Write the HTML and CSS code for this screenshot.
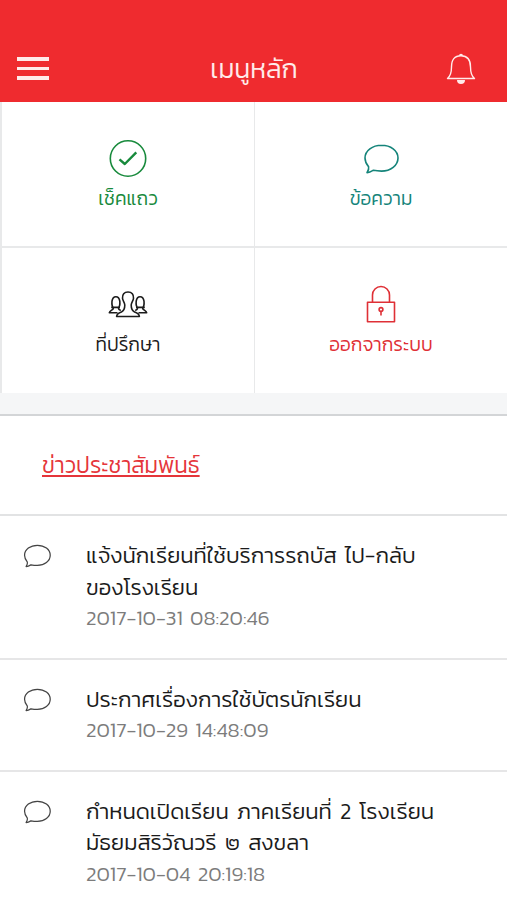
FILE: index.html
```html
<!DOCTYPE html>
<html lang="th">
<head>
<meta charset="utf-8">
<title>เมนูหลัก</title>
<link rel="stylesheet" href="styles.css">
</head>
<body>
<svg width="0" height="0" class="defs" aria-hidden="true">
  <symbol id="bubble" viewBox="0 0 36 30">
    <path d="M18.500 1.200C9.500 1.200 2 6.600 2 14c0 3.900 1.600 6.400 3.600 8.800.5 2.100-.4 4-1.600 5.800 2.600.1 4.700-1.300 6.300-2.300 2.400.5 5.100.8 8.200.8C27.600 27.100 35 21.500 35 14S27.600 1.200 18.500 1.200Z"/>
  </symbol>
</svg>
<header class="topbar">
  <div class="menu"><i></i><i></i><i></i></div>
  <h1>เมนูหลัก</h1>
  <svg class="bell" viewBox="0 0 30 32"><path d="M1.500 25.500c3-2.500 4-5.500 4-11.500C5.500 6.500 8.500 2.800 15 2.800S24.500 6.500 24.500 14c0 6 1 9 4 11.500Z"/><path class="solid" d="M13 2.800a2 2 0 0 1 4 0ZM11 27h8a4 4 0 0 1-8 0Z"/></svg>
</header>
<nav class="tiles">
  <a class="tile green">
    <svg class="icon" viewBox="0 0 40 40"><circle cx="20" cy="19.500" r="17.700"/><path class="thick" d="M11.500 20.300l5.300 4.700L28.300 13.300"/></svg>
    <span>เช็คแถว</span>
  </a>
  <a class="tile teal">
    <svg class="icon talk"><use href="#bubble"/></svg>
    <span>ข้อความ</span>
  </a>
  <a class="tile black">
    <svg class="icon" viewBox="0 0 40 40"><path d="M20 7c-3.900 0-5.800 2.500-5.500 6.200.2 2.600 2.300 4.300 2.300 6.800 0 3.500-.6 5.700-3.400 6.900-2.500 1-4.600 1.500-4.800 4.600h22.800c-.2-3.100-2.300-3.600-4.800-4.600-2.800-1.200-3.400-3.400-3.400-6.900 0-2.500 2.100-4.200 2.300-6.800C25.800 9.500 23.900 7 20 7Z"/><path d="M9.500 27.800H1.300c.3-2.600 3.900-2.200 4.200-5C3.500 21 3.800 18.200 4 16.200c.4-2.900 1.700-4.500 3.900-4.500s3.500 1.600 3.900 4.500c.2 2 .5 4.800-1.500 6.600.2 1.600 1 2.200 2.500 2.700M3.200 22.400h8.800M30.500 27.800h8.200c-.3-2.600-3.900-2.200-4.200-5 2-1.800 1.700-4.600 1.500-6.600-.4-2.900-1.700-4.500-3.900-4.500s-3.500 1.600-3.900 4.500c-.2 2-.5 4.800 1.500 6.600-.2 1.600-1 2.200-2.500 2.700M36.800 22.400H28"/></svg>
    <span>ที่ปรึกษา</span>
  </a>
  <a class="tile red">
    <svg class="icon" viewBox="0 0 40 40"><path d="M6.500 17.200h27v19.600h-27ZM11.500 17.200V10a8.500 8.500 0 0 1 17 0v7.200"/><path d="M20 26v4.500"/><circle cx="20" cy="24.500" r="1.900"/></svg>
    <span>ออกจากระบบ</span>
  </a>
</nav>
<section class="news">
  <div class="heading"><h2>ข่าวประชาสัมพันธ์</h2></div>
  <article class="item">
    <svg><use href="#bubble"/></svg>
    <div><h3>แจ้งนักเรียนที่ใช้บริการรถบัส ไป-กลับ<br>ของโรงเรียน</h3><time>2017-10-31 08:20:46</time></div>
  </article>
  <article class="item">
    <svg><use href="#bubble"/></svg>
    <div><h3>ประกาศเรื่องการใช้บัตรนักเรียน</h3><time>2017-10-29 14:48:09</time></div>
  </article>
  <article class="item">
    <svg><use href="#bubble"/></svg>
    <div><h3>กำหนดเปิดเรียน ภาคเรียนที่ 2 โรงเรียน<br>มัธยมสิริวัณวรี ๒ สงขลา</h3><time>2017-10-04 20:19:18</time></div>
  </article>
</section>
</body>
</html>
```
FILE: styles.css
```css
* { box-sizing: border-box; }
body {
  margin: 0;
  height: 900px;
  overflow: hidden;
  background: #fff;
  color: #1b1b1b;
  font-family: Kanit, Prompt, "Noto Sans", sans-serif;
  font-weight: 300;
}
h1, h2, h3 { margin: 0; font-weight: 300; }
svg { fill: none; stroke: currentColor; stroke-width: 1.6; stroke-linejoin: round; }
.defs { display: none; }

.topbar {
  height: 102px;
  padding: 35px 31px 0 17px;
  background: #ef2b2f;
  color: #ffebea;
  display: grid;
  grid-template-columns: 32px 1fr 30px;
  align-items: center;
}
.menu { display: flex; flex-direction: column; gap: 6px; }
.menu i { height: 3.500px; background: #ffebea; }
.topbar h1 { font-size: 26.600px; line-height: 40px; padding-left: 13px; text-align: center; }
.bell { width: 30px; height: 32px; stroke-width: 1.400; }
.bell .solid { fill: currentColor; stroke: none; }

.tiles {
  height: 291px;
  padding-left: 2px;
  display: grid;
  grid-template-columns: 252px 1fr;
  grid-template-rows: 144px 145px;
  gap: 2px 1px;
  background: #e8e9ea;
}
.tile {
  background: #fff;
  display: flex;
  flex-direction: column;
  align-items: center;
  padding-top: 37px;
  font-size: 19.100px;
  line-height: 28px;
}
.tile span { margin-top: 6px; }
.icon { width: 40px; height: 40px; }
.talk { width: 36px; height: 30px; margin: 5px 0; }
.thick { stroke-width: 2.400; }
.green { color: #188a3c; }
.teal { color: #15847a; }
.black { color: #1b1b1b; }
.red { color: #df3036; }

.news { border-top: 2px solid #d3d5d7; box-shadow: 0 -21px 0 #f5f6f7; margin-top: 21px; }
.heading { height: 100px; border-bottom: 2px solid #e2e3e4; padding: 31px 42px; }
.heading h2 {
  display: inline-block;
  color: #e5353a;
  font-size: 22.500px;
  line-height: 36px;
  text-decoration: underline;
  text-decoration-thickness: 1.500px;
  text-underline-offset: 2px;
  text-decoration-skip-ink: none;
}
.item {
  display: grid;
  grid-template-columns: 62px 1fr;
  padding: 24px 24px 25.700px;
  border-bottom: 2px solid #e6e6e7;
}
.item svg { width: 28px; height: 24px; margin: 4px 0 0 -1px; color: #444; }
.item h3 { font-size: 22.200px; line-height: 31.500px; word-spacing: 3px; }
.item time { display: block; font-size: 20.700px; line-height: 29px; color: #7c7c7c; word-spacing: 2.500px; }
```
